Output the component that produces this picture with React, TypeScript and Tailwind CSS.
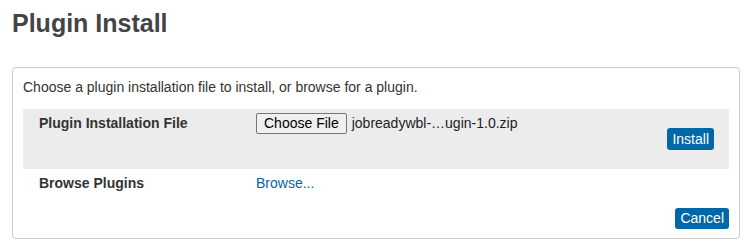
import React from 'react';

const font = { fontFamily: '"Liberation Sans", Arial, sans-serif' };

const App: React.FC = () => {
  return (
    <div className="min-h-[250px] bg-white pl-3 pr-[9px] pt-2 text-[14px] text-[#333]" style={font}>
      <h1 className="text-[25px] font-bold leading-[30px] text-[#444]">Plugin Install</h1>

      <div className="mt-[29px] rounded-[4px] border border-[#ccc] px-[10px] pb-[9px] pt-[10px]">
        <p className="leading-[18px]">
          Choose a plugin installation file to install, or browse for a plugin.
        </p>

        <div className="mt-[13px] grid grid-cols-[233px_1fr]">
          <div className="bg-[#ececec] pl-4 pt-[5px] font-bold leading-[18px] text-[#333]">
            Plugin Installation File
          </div>
          <div className="flex h-[60px] flex-col bg-[#ececec] pr-[15px] pt-1">
            <div className="flex items-center gap-[5px]">
              <button className="h-[21px] rounded-[2px] border border-[#767676] bg-[#efefef] px-[7px] text-[14px] leading-[19px] text-black">
                Choose File
              </button>
              <span className="text-[14px] text-[#222]">jobreadywbl-…ugin-1.0.zip</span>
            </div>
            <div className="flex justify-end">
              <button className="mt-[-6px] h-[22px] rounded-[3px] bg-[#0067a8] px-[5px] text-[14px] leading-[22px] text-white">
                Install
              </button>
            </div>
          </div>

          <div className="pl-4 pt-[5px] font-bold leading-[18px] text-[#333]">Browse Plugins</div>
          <div className="pt-[5px] leading-[18px]">
            <a className="text-[#0067a8]">Browse...</a>
          </div>
        </div>

        <div className="mt-[16px] flex justify-end">
          <button className="h-[21px] rounded-[3px] bg-[#0067a8] px-[5px] text-[14px] leading-[21px] text-white">
            Cancel
          </button>
        </div>
      </div>
    </div>
  );
};

export default App;
